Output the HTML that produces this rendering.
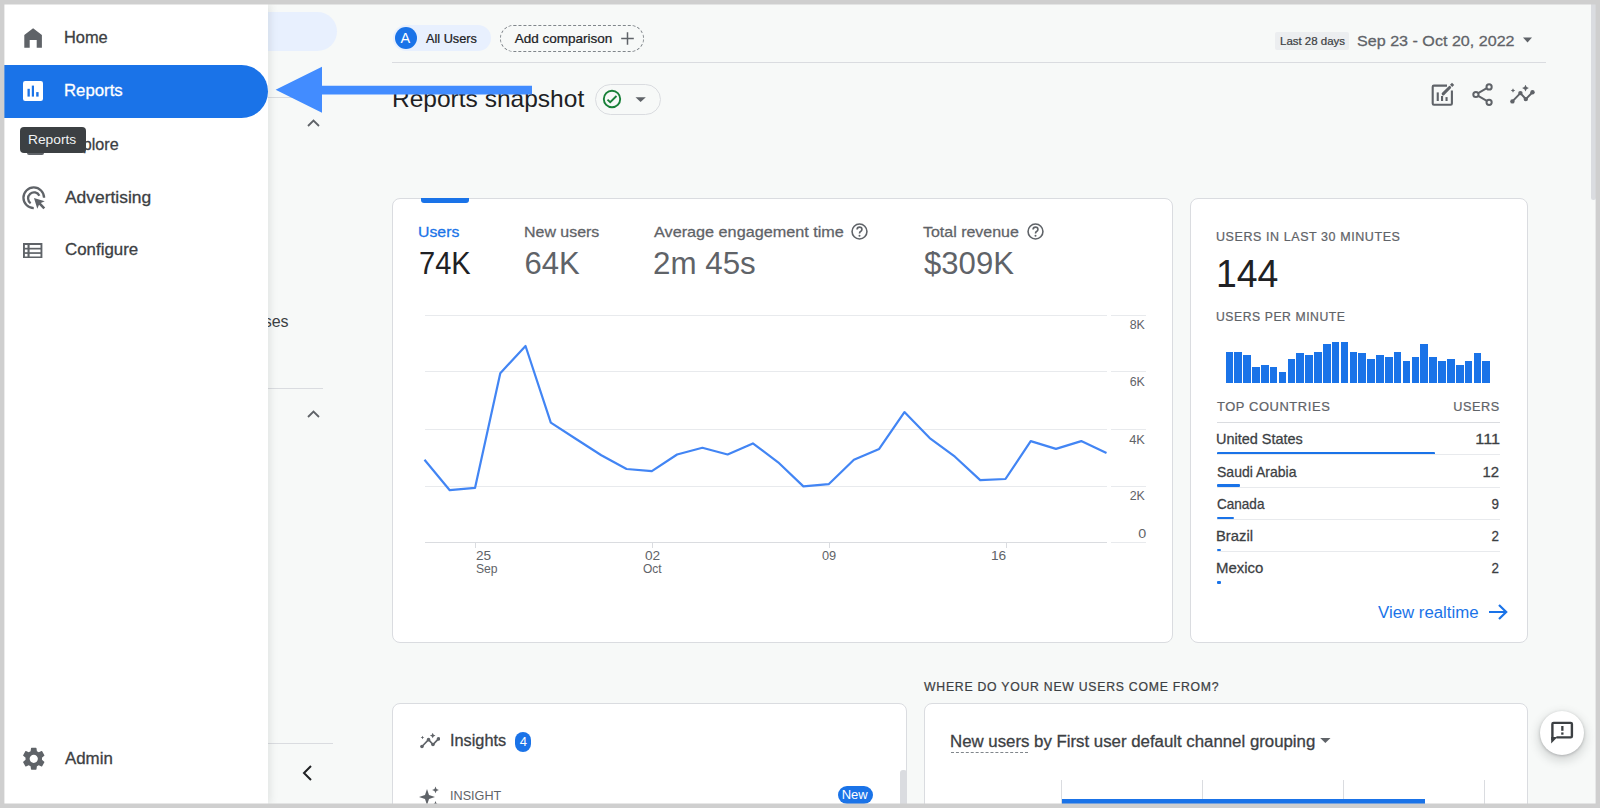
<!DOCTYPE html>
<html><head><meta charset="utf-8"><style>
html,body{margin:0;padding:0;}
body{width:1600px;height:808px;position:relative;overflow:hidden;background:#cfcfcf;font-family:"Liberation Sans", sans-serif;}
.t{position:absolute;white-space:nowrap;}
</style></head><body>
<div style="position:absolute;left:4px;top:4px;width:1592px;height:800px;background:#f7f9f8;"></div>
<div style="position:absolute;left:1591px;top:4px;width:5px;height:195.5px;background:#dadce0;border-radius:0 0 3px 3px;"></div>
<div style="position:absolute;left:268px;top:12px;width:69px;height:39px;background:#e8f0fe;border-radius:0 20px 20px 0;"></div>
<div style="position:absolute;left:268px;top:97px;width:54px;height:1px;background:#dadce0;"></div>
<div style="position:absolute;left:268px;top:388px;width:55px;height:1px;background:#dadce0;"></div>
<div style="position:absolute;left:268px;top:742.5px;width:65px;height:1px;background:#dadce0;"></div>
<svg style="position:absolute;left:306px;top:118px;" width="15" height="10" viewBox="0 0 15 10"><path d="M2 8 L7.5 2.5 L13 8" fill="none" stroke="#5f6368" stroke-width="1.8"/></svg>
<svg style="position:absolute;left:306px;top:409px;" width="15" height="10" viewBox="0 0 15 10"><path d="M2 8 L7.5 2.5 L13 8" fill="none" stroke="#5f6368" stroke-width="1.8"/></svg>
<svg style="position:absolute;left:300px;top:764px;" width="14" height="18" viewBox="0 0 14 18"><path d="M11 2 L4 9 L11 16" fill="none" stroke="#202124" stroke-width="2"/></svg>
<div id="ses" class="t" style="right:1311.40px;top:314.15px;font-size:16px;line-height:16px;color:#3c4043;font-weight:400;letter-spacing:0px;">Purchases</div>
<div style="position:absolute;left:393px;top:25px;width:98px;height:26px;background:#e8f0fe;border-radius:13px;"></div>
<div style="position:absolute;left:394.5px;top:27px;width:22px;height:22px;background:#1a73e8;border-radius:50%;"></div>
<div id="A" class="t" style="left:400.50px;top:30.92px;font-size:14.5px;line-height:14.5px;color:#fff;font-weight:400;letter-spacing:0px;">A</div>
<div id="allusers" class="t" style="left:425.90px;top:31.69px;font-size:13px;line-height:13px;color:#202124;font-weight:400;-webkit-text-stroke:0.23px #202124;letter-spacing:0px;transform:scaleX(0.9789);transform-origin:left center;">All Users</div>
<div style="position:absolute;left:500px;top:25px;width:144px;height:27px;border:1px dashed #80868b;border-radius:14px;box-sizing:border-box;"></div>
<div id="addcmp" class="t" style="left:514.80px;top:31.87px;font-size:13.5px;line-height:13.5px;color:#202124;font-weight:400;-webkit-text-stroke:0.24px #202124;letter-spacing:0px;">Add comparison</div>
<svg style="position:absolute;left:620px;top:31px;" width="15" height="15" viewBox="0 0 15 15"><path d="M7.5 1.2V13.8M1.2 7.5H13.8" stroke="#5f6368" stroke-width="1.5"/></svg>
<div style="position:absolute;left:392px;top:62px;width:1154px;height:1.2px;background:#dadce0;"></div>
<div style="position:absolute;left:1275px;top:32.4px;width:74.4px;height:17.2px;background:#eceef0;border-radius:2px;"></div>
<div id="last28" class="t" style="left:1279.50px;top:35.56px;font-size:11.5px;line-height:11.5px;color:#3c4043;font-weight:400;-webkit-text-stroke:0.21px #3c4043;letter-spacing:0px;transform:scaleX(0.9976);transform-origin:left center;">Last 28 days</div>
<div id="daterange" class="t" style="left:1356.80px;top:33.00px;font-size:15px;line-height:15px;color:#5f6368;font-weight:400;-webkit-text-stroke:0.27px #5f6368;letter-spacing:0px;transform:scaleX(1.0736);transform-origin:left center;">Sep 23 - Oct 20, 2022</div>
<svg style="position:absolute;left:1522px;top:37px;" width="11" height="6" viewBox="0 0 11 6"><path d="M1 0.5H10L5.5 5.5Z" fill="#5f6368"/></svg>
<div id="title" class="t" style="left:391.98px;top:86.68px;font-size:24px;line-height:24px;color:#202124;font-weight:400;letter-spacing:0px;transform:scaleX(1.0217);transform-origin:left center;">Reports snapshot</div>
<div style="position:absolute;left:594.75px;top:84px;width:66px;height:30.5px;border:1px solid #dadce0;border-radius:16px;box-sizing:border-box;"></div>
<svg style="position:absolute;left:601px;top:88px;" width="22" height="22" viewBox="0 0 22 22"><circle cx="11" cy="11" r="8.2" fill="none" stroke="#188038" stroke-width="1.9"/><path d="M6.5 11.6 L9.2 14.2 L15.5 8" fill="none" stroke="#188038" stroke-width="1.9"/></svg>
<svg style="position:absolute;left:634px;top:96px;" width="13" height="7" viewBox="0 0 13 7"><path d="M1.5 1.2H11.8L6.6 6Z" fill="#5f6368"/></svg>
<svg style="position:absolute;left:1428px;top:80px;" width="30" height="30" viewBox="0 0 30 30"><path d="M19 5.6H5.9Q4.7 5.6 4.7 6.8V23.6Q4.7 24.8 5.9 24.8H22.7Q23.9 24.8 23.9 23.6V10.6" fill="none" stroke="#5f6368" stroke-width="2.1"/><rect x="8.7" y="12.4" width="2.1" height="8.6" fill="#5f6368"/><rect x="13" y="16" width="2.1" height="5" fill="#5f6368"/><rect x="17.5" y="17.1" width="2.1" height="3.9" fill="#5f6368"/><path d="M15.2 13.9 L21.6 7.5" stroke="#5f6368" stroke-width="3.1" stroke-linecap="round"/><path d="M23.1 5.9 L25.1 3.9" stroke="#5f6368" stroke-width="3.1"/></svg>
<svg style="position:absolute;left:1470px;top:81px;" width="26" height="26" viewBox="0 0 26 26"><circle cx="19.1" cy="5.9" r="2.6" fill="none" stroke="#5f6368" stroke-width="2"/><circle cx="5.9" cy="13.5" r="2.6" fill="none" stroke="#5f6368" stroke-width="2"/><circle cx="19.1" cy="21.3" r="2.6" fill="none" stroke="#5f6368" stroke-width="2"/><path d="M8.2 12.1 L16.8 7.2 M8.2 14.9 L16.8 19.9" stroke="#5f6368" stroke-width="1.9"/></svg>
<svg style="position:absolute;left:1509.8px;top:85.2px;" width="25.0" height="19.0" viewBox="0 0 25 19"><polyline points="2.4,16.4 10.4,8.1 15.8,14.1 22.5,7.2" fill="none" stroke="#5f6368" stroke-width="2" stroke-linejoin="round"/><circle cx="2.4" cy="16.4" r="2.2" fill="#5f6368"/><circle cx="10.4" cy="8.1" r="2.2" fill="#5f6368"/><circle cx="15.8" cy="14.1" r="2.2" fill="#5f6368"/><circle cx="22.5" cy="7.2" r="2.2" fill="#5f6368"/><path d="M15.5 -0.3 L16.6 2 L18.9 3.1 L16.6 4.2 L15.5 6.5 L14.4 4.2 L12.1 3.1 L14.4 2Z" fill="#5f6368"/><path d="M3 3.3 L3.7 4.8 L5.2 5.5 L3.7 6.2 L3 7.7 L2.3 6.2 L0.8 5.5 L2.3 4.8Z" fill="#5f6368"/></svg>
<div style="position:absolute;left:391.5px;top:198px;width:781.5px;height:444.5px;background:#fff;border:1px solid #dadce0;border-radius:8px;box-sizing:border-box;"></div>
<div style="position:absolute;left:421.2px;top:198px;width:48px;height:4.5px;background:#1a73e8;border-radius:0 0 3px 3px;"></div>
<div id="m_users" class="t" style="left:418.19px;top:224.30px;font-size:15px;line-height:15px;color:#1a73e8;font-weight:400;-webkit-text-stroke:0.27px #1a73e8;letter-spacing:0px;transform:scaleX(1.0552);transform-origin:left center;">Users</div>
<div id="m_new" class="t" style="left:524.44px;top:224.30px;font-size:15px;line-height:15px;color:#5f6368;font-weight:400;-webkit-text-stroke:0.27px #5f6368;letter-spacing:0px;transform:scaleX(1.0634);transform-origin:left center;">New users</div>
<div id="m_avg" class="t" style="left:653.75px;top:224.30px;font-size:15px;line-height:15px;color:#5f6368;font-weight:400;-webkit-text-stroke:0.27px #5f6368;letter-spacing:0px;transform:scaleX(1.0808);transform-origin:left center;">Average engagement time</div>
<div id="m_rev" class="t" style="left:923.25px;top:224.30px;font-size:15px;line-height:15px;color:#5f6368;font-weight:400;-webkit-text-stroke:0.27px #5f6368;letter-spacing:0px;transform:scaleX(1.0645);transform-origin:left center;">Total revenue</div>
<svg style="position:absolute;left:851.3px;top:222.8px;" width="17" height="17" viewBox="0 0 16 16"><circle cx="8" cy="8" r="7" fill="none" stroke="#5f6368" stroke-width="1.5"/><path d="M5.7 6.2 Q5.8 3.9 8 3.9 Q10.3 3.9 10.3 6 Q10.3 7.2 9 8 Q8 8.6 8 9.9" fill="none" stroke="#5f6368" stroke-width="1.5"/><circle cx="8" cy="11.9" r="0.95" fill="#5f6368"/></svg>
<svg style="position:absolute;left:1026.5px;top:222.8px;" width="17" height="17" viewBox="0 0 16 16"><circle cx="8" cy="8" r="7" fill="none" stroke="#5f6368" stroke-width="1.5"/><path d="M5.7 6.2 Q5.8 3.9 8 3.9 Q10.3 3.9 10.3 6 Q10.3 7.2 9 8 Q8 8.6 8 9.9" fill="none" stroke="#5f6368" stroke-width="1.5"/><circle cx="8" cy="11.9" r="0.95" fill="#5f6368"/></svg>
<div id="v_users" class="t" style="left:418.56px;top:247.50px;font-size:31px;line-height:31px;color:#202124;font-weight:400;letter-spacing:0px;transform:scaleX(0.9361);transform-origin:left center;">74K</div>
<div id="v_new" class="t" style="left:524.50px;top:247.50px;font-size:31px;line-height:31px;color:#5f6368;font-weight:400;letter-spacing:0px;">64K</div>
<div id="v_avg" class="t" style="left:652.74px;top:247.50px;font-size:31px;line-height:31px;color:#5f6368;font-weight:400;letter-spacing:0px;transform:scaleX(1.0109);transform-origin:left center;">2m 45s</div>
<div id="v_rev" class="t" style="left:923.50px;top:247.50px;font-size:31px;line-height:31px;color:#5f6368;font-weight:400;letter-spacing:0px;transform:scaleX(1.0032);transform-origin:left center;">$309K</div>
<div style="position:absolute;left:424.5px;top:314.7px;width:682px;height:1px;background:#e8eaed;"></div>
<div style="position:absolute;left:1111px;top:314.7px;width:34.5px;height:1px;background:#e8eaed;"></div>
<div style="position:absolute;left:424.5px;top:371.0px;width:682px;height:1px;background:#e8eaed;"></div>
<div style="position:absolute;left:1111px;top:371.0px;width:34.5px;height:1px;background:#e8eaed;"></div>
<div style="position:absolute;left:424.5px;top:428.8px;width:682px;height:1px;background:#e8eaed;"></div>
<div style="position:absolute;left:1111px;top:428.8px;width:34.5px;height:1px;background:#e8eaed;"></div>
<div style="position:absolute;left:424.5px;top:485.5px;width:682px;height:1px;background:#e8eaed;"></div>
<div style="position:absolute;left:1111px;top:485.5px;width:34.5px;height:1px;background:#e8eaed;"></div>
<div style="position:absolute;left:424.5px;top:542.0px;width:682px;height:1px;background:#e8eaed;"></div>
<div style="position:absolute;left:1111px;top:542.0px;width:34.5px;height:1px;background:#e8eaed;"></div>
<div style="position:absolute;left:424.5px;top:542px;width:682px;height:1px;background:#dadce0;"></div>
<div style="position:absolute;left:474.9px;top:542.5px;width:1px;height:5.5px;background:#dadce0;"></div>
<div style="position:absolute;left:651.9px;top:542.5px;width:1px;height:5.5px;background:#dadce0;"></div>
<div style="position:absolute;left:828.5px;top:542.5px;width:1px;height:5.5px;background:#dadce0;"></div>
<div style="position:absolute;left:1005.5px;top:542.5px;width:1px;height:5.5px;background:#dadce0;"></div>
<div id="y8K" class="t" style="right:454.61px;top:318.09px;font-size:13px;line-height:13px;color:#5f6368;font-weight:400;letter-spacing:0px;transform:scaleX(0.9550);transform-origin:right center;">8K</div>
<div id="y6K" class="t" style="right:454.61px;top:374.99px;font-size:13px;line-height:13px;color:#5f6368;font-weight:400;letter-spacing:0px;transform:scaleX(0.9550);transform-origin:right center;">6K</div>
<div id="y4K" class="t" style="right:454.63px;top:432.59px;font-size:13px;line-height:13px;color:#5f6368;font-weight:400;letter-spacing:0px;transform:scaleX(0.9920);transform-origin:right center;">4K</div>
<div id="y2K" class="t" style="right:454.61px;top:488.89px;font-size:13px;line-height:13px;color:#5f6368;font-weight:400;letter-spacing:0px;transform:scaleX(0.9550);transform-origin:right center;">2K</div>
<div id="y0" class="t" style="right:454.05px;top:527.49px;font-size:13px;line-height:13px;color:#5f6368;font-weight:400;letter-spacing:0px;transform:scaleX(1.1000);transform-origin:right center;">0</div>
<div id="x25" class="t" style="left:475.60px;top:548.99px;font-size:13px;line-height:13px;color:#5f6368;font-weight:400;letter-spacing:0px;transform:scaleX(1.0471);transform-origin:left center;">25</div>
<div id="xsep" class="t" style="left:475.60px;top:561.69px;font-size:13px;line-height:13px;color:#5f6368;font-weight:400;letter-spacing:0px;transform:scaleX(0.9345);transform-origin:left center;">Sep</div>
<div id="x02" class="t" style="left:645.00px;top:548.99px;font-size:13px;line-height:13px;color:#5f6368;font-weight:400;letter-spacing:0px;transform:scaleX(1.0541);transform-origin:left center;">02</div>
<div id="xoct" class="t" style="left:643.00px;top:561.69px;font-size:13px;line-height:13px;color:#5f6368;font-weight:400;letter-spacing:0px;transform:scaleX(0.9218);transform-origin:left center;">Oct</div>
<div id="x09" class="t" style="left:822.00px;top:548.99px;font-size:13px;line-height:13px;color:#5f6368;font-weight:400;letter-spacing:0px;transform:scaleX(0.9838);transform-origin:left center;">09</div>
<div id="x16" class="t" style="left:991.00px;top:548.99px;font-size:13px;line-height:13px;color:#5f6368;font-weight:400;letter-spacing:0px;transform:scaleX(1.0541);transform-origin:left center;">16</div>
<svg style="position:absolute;left:0px;top:0px;pointer-events:none;" width="1600" height="808" viewBox="0 0 1600 808"><polyline points="424.50,459.70 449.76,490.20 475.02,487.90 500.28,373.20 525.54,346.00 550.80,422.60 576.06,439.00 601.31,455.20 626.57,469.00 651.83,471.20 677.09,454.50 702.35,447.80 727.61,454.50 752.87,443.40 778.13,462.30 803.39,486.40 828.65,484.20 853.91,459.70 879.17,448.90 904.43,412.10 929.69,438.10 954.94,456.70 980.20,480.10 1005.46,479.00 1030.72,441.10 1055.98,448.90 1081.24,441.10 1106.50,453.00" fill="none" stroke="#4285f4" stroke-width="2.2" stroke-linejoin="round"/></svg>
<div style="position:absolute;left:1189.5px;top:198px;width:338px;height:444.5px;background:#fff;border:1px solid #dadce0;border-radius:8px;box-sizing:border-box;"></div>
<div id="rt1" class="t" style="left:1215.94px;top:230.49px;font-size:13px;line-height:13px;color:#5f6368;font-weight:400;-webkit-text-stroke:0.23px #5f6368;letter-spacing:0.6px;transform:scaleX(0.9615);transform-origin:left center;">USERS IN LAST 30 MINUTES</div>
<div id="rt144" class="t" style="left:1215.78px;top:253.68px;font-size:39px;line-height:39px;color:#202124;font-weight:400;letter-spacing:0px;transform:scaleX(0.9586);transform-origin:left center;">144</div>
<div id="rt2" class="t" style="left:1216.06px;top:310.29px;font-size:13px;line-height:13px;color:#5f6368;font-weight:400;-webkit-text-stroke:0.23px #5f6368;letter-spacing:0.6px;transform:scaleX(0.9372);transform-origin:left center;">USERS PER MINUTE</div>
<div style="position:absolute;left:1225.5px;top:351.7px;width:7.66px;height:31.2px;background:#1a73e8;"></div>
<div style="position:absolute;left:1234.36px;top:351.7px;width:7.66px;height:31.2px;background:#1a73e8;"></div>
<div style="position:absolute;left:1243.22px;top:354.8px;width:7.66px;height:28.1px;background:#1a73e8;"></div>
<div style="position:absolute;left:1252.08px;top:366.8px;width:7.66px;height:16.1px;background:#1a73e8;"></div>
<div style="position:absolute;left:1260.94px;top:365px;width:7.66px;height:17.9px;background:#1a73e8;"></div>
<div style="position:absolute;left:1269.8px;top:366.8px;width:7.66px;height:16.1px;background:#1a73e8;"></div>
<div style="position:absolute;left:1278.66px;top:372.2px;width:7.66px;height:10.7px;background:#1a73e8;"></div>
<div style="position:absolute;left:1287.52px;top:359px;width:7.66px;height:23.9px;background:#1a73e8;"></div>
<div style="position:absolute;left:1296.38px;top:353.2px;width:7.66px;height:29.7px;background:#1a73e8;"></div>
<div style="position:absolute;left:1305.24px;top:354.8px;width:7.66px;height:28.1px;background:#1a73e8;"></div>
<div style="position:absolute;left:1314.1px;top:351.7px;width:7.66px;height:31.2px;background:#1a73e8;"></div>
<div style="position:absolute;left:1322.96px;top:343.9px;width:7.66px;height:39.0px;background:#1a73e8;"></div>
<div style="position:absolute;left:1331.82px;top:341.5px;width:7.66px;height:41.4px;background:#1a73e8;"></div>
<div style="position:absolute;left:1340.68px;top:341.5px;width:7.66px;height:41.4px;background:#1a73e8;"></div>
<div style="position:absolute;left:1349.54px;top:351.7px;width:7.66px;height:31.2px;background:#1a73e8;"></div>
<div style="position:absolute;left:1358.4px;top:353.2px;width:7.66px;height:29.7px;background:#1a73e8;"></div>
<div style="position:absolute;left:1367.26px;top:359px;width:7.66px;height:23.9px;background:#1a73e8;"></div>
<div style="position:absolute;left:1376.12px;top:354.8px;width:7.66px;height:28.1px;background:#1a73e8;"></div>
<div style="position:absolute;left:1384.98px;top:357.1px;width:7.66px;height:25.8px;background:#1a73e8;"></div>
<div style="position:absolute;left:1393.84px;top:351.7px;width:7.66px;height:31.2px;background:#1a73e8;"></div>
<div style="position:absolute;left:1402.7px;top:361px;width:7.66px;height:21.9px;background:#1a73e8;"></div>
<div style="position:absolute;left:1411.56px;top:357.1px;width:7.66px;height:25.8px;background:#1a73e8;"></div>
<div style="position:absolute;left:1420.42px;top:343.9px;width:7.66px;height:39.0px;background:#1a73e8;"></div>
<div style="position:absolute;left:1429.28px;top:357.1px;width:7.66px;height:25.8px;background:#1a73e8;"></div>
<div style="position:absolute;left:1438.14px;top:361px;width:7.66px;height:21.9px;background:#1a73e8;"></div>
<div style="position:absolute;left:1447.0px;top:359px;width:7.66px;height:23.9px;background:#1a73e8;"></div>
<div style="position:absolute;left:1455.86px;top:365px;width:7.66px;height:17.9px;background:#1a73e8;"></div>
<div style="position:absolute;left:1464.72px;top:361px;width:7.66px;height:21.9px;background:#1a73e8;"></div>
<div style="position:absolute;left:1473.58px;top:353.2px;width:7.66px;height:29.7px;background:#1a73e8;"></div>
<div style="position:absolute;left:1482.44px;top:361px;width:7.66px;height:21.9px;background:#1a73e8;"></div>
<div id="rt3" class="t" style="left:1217.00px;top:400.19px;font-size:13px;line-height:13px;color:#5f6368;font-weight:400;-webkit-text-stroke:0.23px #5f6368;letter-spacing:0.6px;transform:scaleX(0.9922);transform-origin:left center;">TOP COUNTRIES</div>
<div id="rt4" class="t" style="right:100.24px;top:400.19px;font-size:13px;line-height:13px;color:#5f6368;font-weight:400;-webkit-text-stroke:0.23px #5f6368;letter-spacing:0.6px;transform:scaleX(0.9760);transform-origin:right center;">USERS</div>
<div style="position:absolute;left:1217px;top:422.3px;width:282.5px;height:1px;background:#dadce0;"></div>
<div id="c0" class="t" style="left:1216.00px;top:432.42px;font-size:14.5px;line-height:14.5px;color:#3c4043;font-weight:400;-webkit-text-stroke:0.26px #3c4043;letter-spacing:0px;transform:scaleX(0.9977);transform-origin:left center;">United States</div>
<div id="v0" class="t" style="right:100.43px;top:432.42px;font-size:14.5px;line-height:14.5px;color:#3c4043;font-weight:400;-webkit-text-stroke:0.26px #3c4043;letter-spacing:0px;transform:scaleX(1.1203);transform-origin:right center;">111</div>
<div style="position:absolute;left:1217px;top:452.2px;width:218.0999999999999px;height:2.6px;background:#1a73e8;border-radius:1px;"></div>
<div style="position:absolute;left:1217px;top:454.3px;width:282.5px;height:1px;background:#e8eaed;"></div>
<div id="c1" class="t" style="left:1217.00px;top:464.62px;font-size:14.5px;line-height:14.5px;color:#3c4043;font-weight:400;-webkit-text-stroke:0.26px #3c4043;letter-spacing:0px;transform:scaleX(0.9659);transform-origin:left center;">Saudi Arabia</div>
<div id="v1" class="t" style="right:100.43px;top:464.62px;font-size:14.5px;line-height:14.5px;color:#3c4043;font-weight:400;-webkit-text-stroke:0.26px #3c4043;letter-spacing:0px;transform:scaleX(1.0289);transform-origin:right center;">12</div>
<div style="position:absolute;left:1217px;top:484.4px;width:23.200000000000045px;height:2.6px;background:#1a73e8;border-radius:1px;"></div>
<div style="position:absolute;left:1217px;top:486.5px;width:282.5px;height:1px;background:#e8eaed;"></div>
<div id="c2" class="t" style="left:1217.00px;top:496.82px;font-size:14.5px;line-height:14.5px;color:#3c4043;font-weight:400;-webkit-text-stroke:0.26px #3c4043;letter-spacing:0px;transform:scaleX(0.9337);transform-origin:left center;">Canada</div>
<div id="v2" class="t" style="right:100.44px;top:496.82px;font-size:14.5px;line-height:14.5px;color:#3c4043;font-weight:400;-webkit-text-stroke:0.26px #3c4043;letter-spacing:0px;transform:scaleX(0.9250);transform-origin:right center;">9</div>
<div style="position:absolute;left:1217px;top:516.6px;width:17px;height:2.6px;background:#1a73e8;border-radius:1px;"></div>
<div style="position:absolute;left:1217px;top:518.7px;width:282.5px;height:1px;background:#e8eaed;"></div>
<div id="c3" class="t" style="left:1215.98px;top:529.02px;font-size:14.5px;line-height:14.5px;color:#3c4043;font-weight:400;-webkit-text-stroke:0.26px #3c4043;letter-spacing:0px;transform:scaleX(1.0190);transform-origin:left center;">Brazil</div>
<div id="v3" class="t" style="right:100.44px;top:529.02px;font-size:14.5px;line-height:14.5px;color:#3c4043;font-weight:400;-webkit-text-stroke:0.26px #3c4043;letter-spacing:0px;transform:scaleX(0.9250);transform-origin:right center;">2</div>
<div style="position:absolute;left:1217px;top:548.8px;width:3.5px;height:2.6px;background:#1a73e8;border-radius:1px;"></div>
<div style="position:absolute;left:1217px;top:550.9px;width:282.5px;height:1px;background:#e8eaed;"></div>
<div id="c4" class="t" style="left:1215.97px;top:561.22px;font-size:14.5px;line-height:14.5px;color:#3c4043;font-weight:400;-webkit-text-stroke:0.26px #3c4043;letter-spacing:0px;transform:scaleX(1.0320);transform-origin:left center;">Mexico</div>
<div id="v4" class="t" style="right:100.44px;top:561.22px;font-size:14.5px;line-height:14.5px;color:#3c4043;font-weight:400;-webkit-text-stroke:0.26px #3c4043;letter-spacing:0px;transform:scaleX(0.9250);transform-origin:right center;">2</div>
<div style="position:absolute;left:1217px;top:581.0px;width:3.5px;height:2.6px;background:#1a73e8;border-radius:1px;"></div>
<div id="viewrt" class="t" style="left:1377.90px;top:604.85px;font-size:16px;line-height:16px;color:#1a73e8;font-weight:400;letter-spacing:0px;transform:scaleX(1.0507);transform-origin:left center;">View realtime</div>
<svg style="position:absolute;left:1487px;top:603px;" width="22" height="18" viewBox="0 0 22 18"><path d="M2 9H19M12 2 L19.2 9 L12 16" fill="none" stroke="#1a73e8" stroke-width="2.2"/></svg>
<div id="where" class="t" style="left:924.40px;top:679.59px;font-size:13px;line-height:13px;color:#3c4043;font-weight:400;-webkit-text-stroke:0.23px #3c4043;letter-spacing:0.8px;transform:scaleX(0.9415);transform-origin:left center;">WHERE DO YOUR NEW USERS COME FROM?</div>
<div style="position:absolute;left:391.5px;top:703px;width:515px;height:120px;background:#fff;border:1px solid #dadce0;border-radius:8px;box-sizing:border-box;"></div>
<div style="position:absolute;left:923.5px;top:703px;width:604.5px;height:120px;background:#fff;border:1px solid #dadce0;border-radius:8px;box-sizing:border-box;"></div>
<svg style="position:absolute;left:419.6px;top:733.2px;" width="20.5" height="15.579999999999998" viewBox="0 0 25 19"><polyline points="2.4,16.4 10.4,8.1 15.8,14.1 22.5,7.2" fill="none" stroke="#5f6368" stroke-width="2" stroke-linejoin="round"/><circle cx="2.4" cy="16.4" r="2.2" fill="#5f6368"/><circle cx="10.4" cy="8.1" r="2.2" fill="#5f6368"/><circle cx="15.8" cy="14.1" r="2.2" fill="#5f6368"/><circle cx="22.5" cy="7.2" r="2.2" fill="#5f6368"/><path d="M15.5 -0.3 L16.6 2 L18.9 3.1 L16.6 4.2 L15.5 6.5 L14.4 4.2 L12.1 3.1 L14.4 2Z" fill="#5f6368"/><path d="M3 3.3 L3.7 4.8 L5.2 5.5 L3.7 6.2 L3 7.7 L2.3 6.2 L0.8 5.5 L2.3 4.8Z" fill="#5f6368"/></svg>
<div id="ins" class="t" style="left:449.58px;top:733.45px;font-size:16px;line-height:16px;color:#3c4043;font-weight:400;-webkit-text-stroke:0.29px #3c4043;letter-spacing:0px;transform:scaleX(1.0177);transform-origin:left center;">Insights</div>
<div style="position:absolute;left:515.1px;top:731.7px;width:16.1px;height:19.9px;background:#1a73e8;border-radius:9px;"></div>
<div id="ins4" class="t" style="left:519.65px;top:735.19px;font-size:13px;line-height:13px;color:#fff;font-weight:400;letter-spacing:0px;">4</div>
<svg style="position:absolute;left:419px;top:786px;" width="22" height="22" viewBox="0 0 22 22"><path d="M8 3 L10 9 L16 11 L10 13 L8 19 L6 13 L0 11 L6 9Z" fill="#5f6368"/><path d="M16.5 0.5 L17.5 2.9 L19.9 3.9 L17.5 4.9 L16.5 7.3 L15.5 4.9 L13.1 3.9 L15.5 2.9Z" fill="#5f6368"/><path d="M16.5 15 L17.5 17.4 L19.9 18.4 L17.5 19.4 L16.5 21.8 L15.5 19.4 L13.1 18.4 L15.5 17.4Z" fill="#5f6368"/></svg>
<div id="insight" class="t" style="left:449.66px;top:789.37px;font-size:13.5px;line-height:13.5px;color:#5f6368;font-weight:400;letter-spacing:0px;transform:scaleX(0.9364);transform-origin:left center;">INSIGHT</div>
<div style="position:absolute;left:837.8px;top:785.6px;width:35.5px;height:18px;background:#1a73e8;border-radius:9px;"></div>
<div id="new" class="t" style="left:841.74px;top:788.49px;font-size:13px;line-height:13px;color:#fff;font-weight:400;letter-spacing:0px;">New</div>
<div style="position:absolute;left:900px;top:770px;width:6.5px;height:40px;background:#dadce0;border-radius:3px 3px 0 0;"></div>
<div id="nub" class="t" style="left:949.95px;top:733.65px;font-size:16px;line-height:16px;color:#3c4043;font-weight:400;-webkit-text-stroke:0.29px #3c4043;letter-spacing:0px;transform:scaleX(1.0505);transform-origin:left center;">New users by First user default channel grouping</div>
<div style="position:absolute;left:951px;top:751.5px;width:76.6px;height:0px;border-top:1.2px dashed #80868b;"></div>
<svg style="position:absolute;left:1319px;top:737px;" width="13" height="7" viewBox="0 0 13 7"><path d="M1.2 1H11.5L6.35 6Z" fill="#5f6368"/></svg>
<div style="position:absolute;left:1061.4px;top:780px;width:1px;height:30px;background:#dadce0;"></div>
<div style="position:absolute;left:1202.2px;top:780px;width:1px;height:30px;background:#dadce0;"></div>
<div style="position:absolute;left:1343.1px;top:780px;width:1px;height:30px;background:#dadce0;"></div>
<div style="position:absolute;left:1483.5px;top:780px;width:1px;height:30px;background:#dadce0;"></div>
<div style="position:absolute;left:1061.9px;top:799px;width:363.1px;height:10px;background:#1a73e8;"></div>
<div style="position:absolute;left:1540px;top:711px;width:44px;height:44px;background:#fff;border-radius:50%;box-shadow:0 1px 3px rgba(60,64,67,.3),0 4px 8px 3px rgba(60,64,67,.15);"></div>
<svg style="position:absolute;left:1530px;top:700px;" width="70" height="70" viewBox="0 0 70 70"><path d="M22.4 40V24.1Q22.4 22.9 23.6 22.9H40.7Q41.9 22.9 41.9 24.1V36.2Q41.9 37.4 40.7 37.4H26.4" fill="none" stroke="#3c4043" stroke-width="2.4"/><path d="M21.2 37 L21.2 43.4 L27.5 37.1 Z" fill="#3c4043"/><rect x="31.2" y="26" width="2.3" height="4.8" fill="#3c4043"/><rect x="31.2" y="32.4" width="2.3" height="2.3" fill="#3c4043"/></svg>
<div style="position:absolute;left:4px;top:4px;width:264px;height:800px;background:#fff;box-shadow:2px 0 8px rgba(60,64,67,.12);"></div>
<div style="position:absolute;left:4px;top:65px;width:264px;height:53px;background:#1a73e8;border-radius:0 26.5px 26.5px 0;"></div>
<svg style="position:absolute;left:18px;top:24px;" width="30" height="30" viewBox="0 0 30 30"><path d="M6.3 23.8V10.9L15.1 4.3L23.9 10.9V23.8H18.7V16H11.7V23.8Z" fill="#5f6368"/></svg>
<svg style="position:absolute;left:23.2px;top:81.2px;" width="20" height="20" viewBox="0 0 20 20"><rect x="0" y="0" width="20" height="20" rx="2.2" fill="#fff"/><rect x="4.5" y="7.8" width="2.3" height="7.8" fill="#1a73e8"/><rect x="8.8" y="4.6" width="2.2" height="11" fill="#1a73e8"/><rect x="13.2" y="11.1" width="2.4" height="4.5" fill="#1a73e8"/></svg>
<div style="position:absolute;left:27px;top:140px;width:17px;height:15px;background:#5f6368;border-radius:2px;"></div>
<svg style="position:absolute;left:19.75px;top:183.85px;" width="27.5" height="27.5" viewBox="0 0 24 24"><path d="M12 21 A9 9 0 1 1 21 12" fill="none" stroke="#5f6368" stroke-width="2"/><path d="M9.3 16.8 A5.2 5.2 0 1 1 16.9 10.2" fill="none" stroke="#5f6368" stroke-width="2"/><path d="M12.2 12.3 L21.6 15.1 L18.2 16.6 L22 20.4 L20.4 22 L16.6 18.2 L15.1 21.6Z" fill="#5f6368"/></svg>
<svg style="position:absolute;left:23.4px;top:243.1px;" width="19.4" height="15.4" viewBox="0 0 19.4 15.4"><rect x="0" y="0" width="19.4" height="15.4" fill="#5f6368"/><rect x="1.9" y="2" width="2.6" height="2.8" fill="#fff"/><rect x="6.6" y="2" width="10.9" height="2.8" fill="#fff"/><rect x="1.9" y="6.5" width="2.6" height="2.7" fill="#fff"/><rect x="6.6" y="6.5" width="10.9" height="2.7" fill="#fff"/><rect x="1.9" y="10.9" width="2.6" height="2.6" fill="#fff"/><rect x="6.6" y="10.9" width="10.9" height="2.6" fill="#fff"/></svg>
<svg style="position:absolute;left:19.55px;top:745.15px;" width="27.5" height="27.5" viewBox="0 0 24 24"><path fill="#5f6368" d="M19.14 12.94c.04-.3.06-.61.06-.94 0-.32-.02-.64-.07-.94l2.03-1.58c.18-.14.23-.41.12-.61l-1.92-3.32c-.12-.22-.37-.29-.59-.22l-2.39.96c-.5-.38-1.03-.7-1.62-.94l-.36-2.54c-.04-.24-.24-.41-.48-.41h-3.84c-.24 0-.43.17-.47.41l-.36 2.54c-.59.24-1.13.57-1.62.94l-2.39-.96c-.22-.08-.47 0-.59.22L2.74 8.87c-.12.21-.08.47.12.61l2.030 1.58c-.05.3-.09.63-.09.94s.02.64.07.94l-2.03 1.58c-.18.14-.23.41-.12.61l1.92 3.32c.12.22.37.29.59.22l2.39-.96c.5.38 1.03.7 1.62.94l.36 2.54c.05.24.24.41.48.41h3.84c.24 0 .44-.17.47-.41l.36-2.54c.59-.24 1.13-.56 1.62-.94l2.39.96c.22.08.47 0 .59-.22l1.92-3.32c.12-.22.07-.47-.12-.61l-2.01-1.58zM12 15.6c-1.98 0-3.6-1.62-3.6-3.6s1.62-3.6 3.6-3.6 3.6 1.62 3.6 3.6-1.62 3.6-3.6 3.6z"/></svg>
<div id="home" class="t" style="left:63.78px;top:29.85px;font-size:16px;line-height:16px;color:#3c4043;font-weight:400;-webkit-text-stroke:0.29px #3c4043;letter-spacing:0px;transform:scaleX(1.0244);transform-origin:left center;">Home</div>
<div id="reports" class="t" style="left:63.75px;top:82.65px;font-size:16px;line-height:16px;color:#fff;font-weight:400;-webkit-text-stroke:0.29px #fff;letter-spacing:0px;transform:scaleX(1.0486);transform-origin:left center;">Reports</div>
<div id="explore" class="t" style="left:63.79px;top:136.65px;font-size:16px;line-height:16px;color:#3c4043;font-weight:400;-webkit-text-stroke:0.29px #3c4043;letter-spacing:0px;transform:scaleX(1.0065);transform-origin:left center;">Explore</div>
<div id="adv" class="t" style="left:65.00px;top:189.55px;font-size:16px;line-height:16px;color:#3c4043;font-weight:400;-webkit-text-stroke:0.29px #3c4043;letter-spacing:0px;transform:scaleX(1.0888);transform-origin:left center;">Advertising</div>
<div id="conf" class="t" style="left:65.00px;top:242.45px;font-size:16px;line-height:16px;color:#3c4043;font-weight:400;-webkit-text-stroke:0.29px #3c4043;letter-spacing:0px;transform:scaleX(1.0550);transform-origin:left center;">Configure</div>
<div id="admin" class="t" style="left:64.80px;top:750.55px;font-size:16px;line-height:16px;color:#3c4043;font-weight:400;-webkit-text-stroke:0.29px #3c4043;letter-spacing:0px;transform:scaleX(1.0528);transform-origin:left center;">Admin</div>
<div style="position:absolute;left:20px;top:127px;width:66px;height:26px;background:#3c4043;border-radius:4px;"></div>
<div id="tip" class="t" style="left:28.18px;top:133.27px;font-size:13.5px;line-height:13.5px;color:#f1f3f4;font-weight:400;letter-spacing:0px;transform:scaleX(1.0211);transform-origin:left center;">Reports</div>
<svg style="position:absolute;left:270px;top:60px;" width="270" height="60" viewBox="270 60 270 60"><path d="M275.6 89.8 L322 66.7 L322 85.8 L532 85.8 L532 94.4 L322 94.4 L322 112.8Z" fill="#428cff"/></svg>
<svg style="position:absolute;left:0px;top:0px;pointer-events:none;" width="1600" height="808" viewBox="0 0 1600 808"><path fill-rule="evenodd" fill="#cfcfcf" d="M0 0H1600V808H0Z M4.4 4.4V803.6H1595.6V4.4Z"/></svg>
</body></html>
